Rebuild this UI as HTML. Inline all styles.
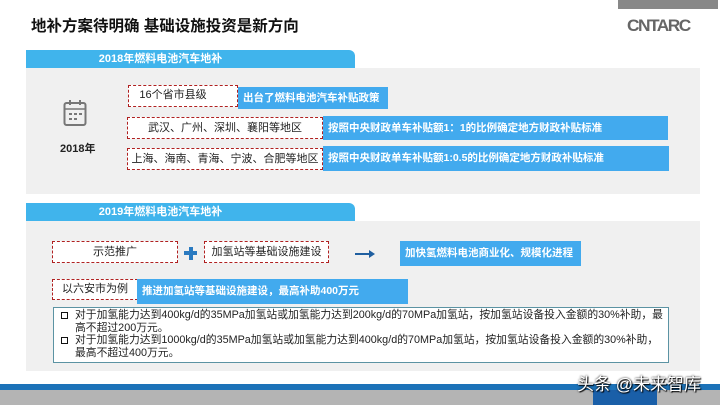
<!DOCTYPE html>
<html><head><meta charset="utf-8"><style>
*{margin:0;padding:0;box-sizing:border-box}
body{width:720px;height:405px;position:relative;overflow:hidden;background:#fff;font-family:"Liberation Sans","Noto Sans CJK SC",sans-serif;color:#222}
.a{position:absolute}
.hdr{background:#40b4ec;color:#fff;font-weight:bold;font-size:11px;line-height:18px;text-align:center;border-radius:0 6px 0 0;padding-right:60px}
.panel{background:#f0f0f0}
.dash{border:1px dashed #b02020;background:#fff;font-size:11px;text-align:center;color:#222}
.blue{background:#42aaee;color:#fff;font-weight:bold;font-size:10.5px;padding-left:5px}
.t{font-size:10.8px;line-height:12.5px;color:#222;white-space:nowrap}
</style></head><body>
<div class="a" style="left:618px;top:0;width:100px;height:9px;background:#888"></div>
<div class="a" style="left:31px;top:14px;font-size:15.5px;font-weight:bold;color:#111">地补方案待明确 基础设施投资是新方向</div>
<div class="a" style="left:627px;top:16px;font-size:17px;font-weight:bold;color:#666;letter-spacing:-1.5px;transform:scaleX(1.02);transform-origin:left">CNTARC</div>

<div class="a hdr" style="left:26px;top:50px;width:329px;height:18px">2018年燃料电池汽车地补</div>
<div class="a panel" style="left:26px;top:68px;width:674px;height:126px"></div>
<svg class="a" style="left:63px;top:99px" width="24" height="28" viewBox="0 0 24 28"><rect x="1.5" y="4" width="21" height="22" rx="2" fill="none" stroke="#777" stroke-width="2"/><line x1="2" y1="10" x2="22" y2="10" stroke="#777" stroke-width="1.5"/><line x1="7" y1="1" x2="7" y2="6" stroke="#777" stroke-width="2"/><line x1="17" y1="1" x2="17" y2="6" stroke="#777" stroke-width="2"/><g fill="#777"><rect x="6" y="14" width="3" height="2"/><rect x="11" y="14" width="3" height="2"/><rect x="16" y="14" width="3" height="2"/><rect x="6" y="19" width="3" height="2"/><rect x="11" y="19" width="3" height="2"/></g></svg>
<div class="a" style="left:60px;top:140px;font-size:11px;font-weight:bold">2018年</div>

<div class="a dash" style="left:128px;top:85px;width:110px;height:22px;line-height:19px;padding-right:20px">16个省市县级</div>
<div class="a blue" style="left:238px;top:87px;width:150px;height:22px;line-height:22px">出台了燃料电池汽车补贴政策</div>
<div class="a dash" style="left:127px;top:117px;width:196px;height:22px;line-height:21px">武汉、广州、深圳、襄阳等地区</div>
<div class="a blue" style="left:323px;top:116px;width:345px;height:24px;line-height:24px">按照中央财政单车补贴额1：1的比例确定地方财政补贴标准</div>
<div class="a dash" style="left:127px;top:148px;width:196px;height:22px;line-height:21px">上海、海南、青海、宁波、合肥等地区</div>
<div class="a blue" style="left:323px;top:146px;width:346px;height:25px;line-height:25px">按照中央财政单车补贴额1:0.5的比例确定地方财政补贴标准</div>

<div class="a hdr" style="left:26px;top:203px;width:329px;height:18px">2019年燃料电池汽车地补</div>
<div class="a panel" style="left:26px;top:221px;width:674px;height:150px"></div>
<div class="a dash" style="left:52px;top:241px;width:126px;height:22px;line-height:20px">示范推广</div>
<div class="a" style="left:184px;top:251px;width:13px;height:4px;background:#2a7ac0"></div>
<div class="a" style="left:188.5px;top:246.5px;width:4px;height:13px;background:#2a7ac0"></div>
<div class="a dash" style="left:204px;top:241px;width:125px;height:22px;line-height:20px">加氢站等基础设施建设</div>
<div class="a" style="left:355px;top:253px;width:16px;height:2px;background:#1f5fa0"></div>
<div class="a" style="left:369px;top:250px;width:0;height:0;border-left:6px solid #1f5fa0;border-top:4px solid transparent;border-bottom:4px solid transparent"></div>
<div class="a blue" style="left:400px;top:241px;width:181px;height:25px;line-height:25px">加快氢燃料电池商业化、规模化进程</div>
<div class="a dash" style="left:52px;top:279px;width:86px;height:21px;line-height:19px">以六安市为例</div>
<div class="a blue" style="left:137px;top:279px;width:271px;height:25px;line-height:25px">推进加氢站等基础设施建设，最高补助400万元</div>
<div class="a" style="left:53px;top:307px;width:616px;height:56px;border:1px solid #5b93a3;background:#fff"></div>
<div class="a" style="left:61px;top:312px;width:7px;height:7px;border:1.5px solid #111"></div>
<div class="a t" style="left:75px;top:309px">对于加氢能力达到400kg/d的35MPa加氢站或加氢能力达到200kg/d的70MPa加氢站，按加氢站设备投入金额的30%补助，最<br>高不超过200万元。</div>
<div class="a" style="left:61px;top:337px;width:7px;height:7px;border:1.5px solid #111"></div>
<div class="a t" style="left:75px;top:334px">对于加氢能力达到1000kg/d的35MPa加氢站或加氢能力达到400kg/d的70MPa加氢站，按加氢站设备投入金额的30%补助，<br>最高不超过400万元。</div>

<div class="a" style="left:0;top:384px;width:720px;height:6px;background:#1c72b8"></div>
<div class="a" style="left:0;top:390px;width:720px;height:15px;background:#b4b4b4"></div>
<div class="a" style="left:593px;top:390px;width:64px;height:15px;background:#1a5fa8"></div>
<div class="a" style="left:577px;top:370px;font-size:17px;color:#fff;text-shadow:0 0 2px #000,1px 1px 1px #000">头条 @未来智库</div>
</body></html>
